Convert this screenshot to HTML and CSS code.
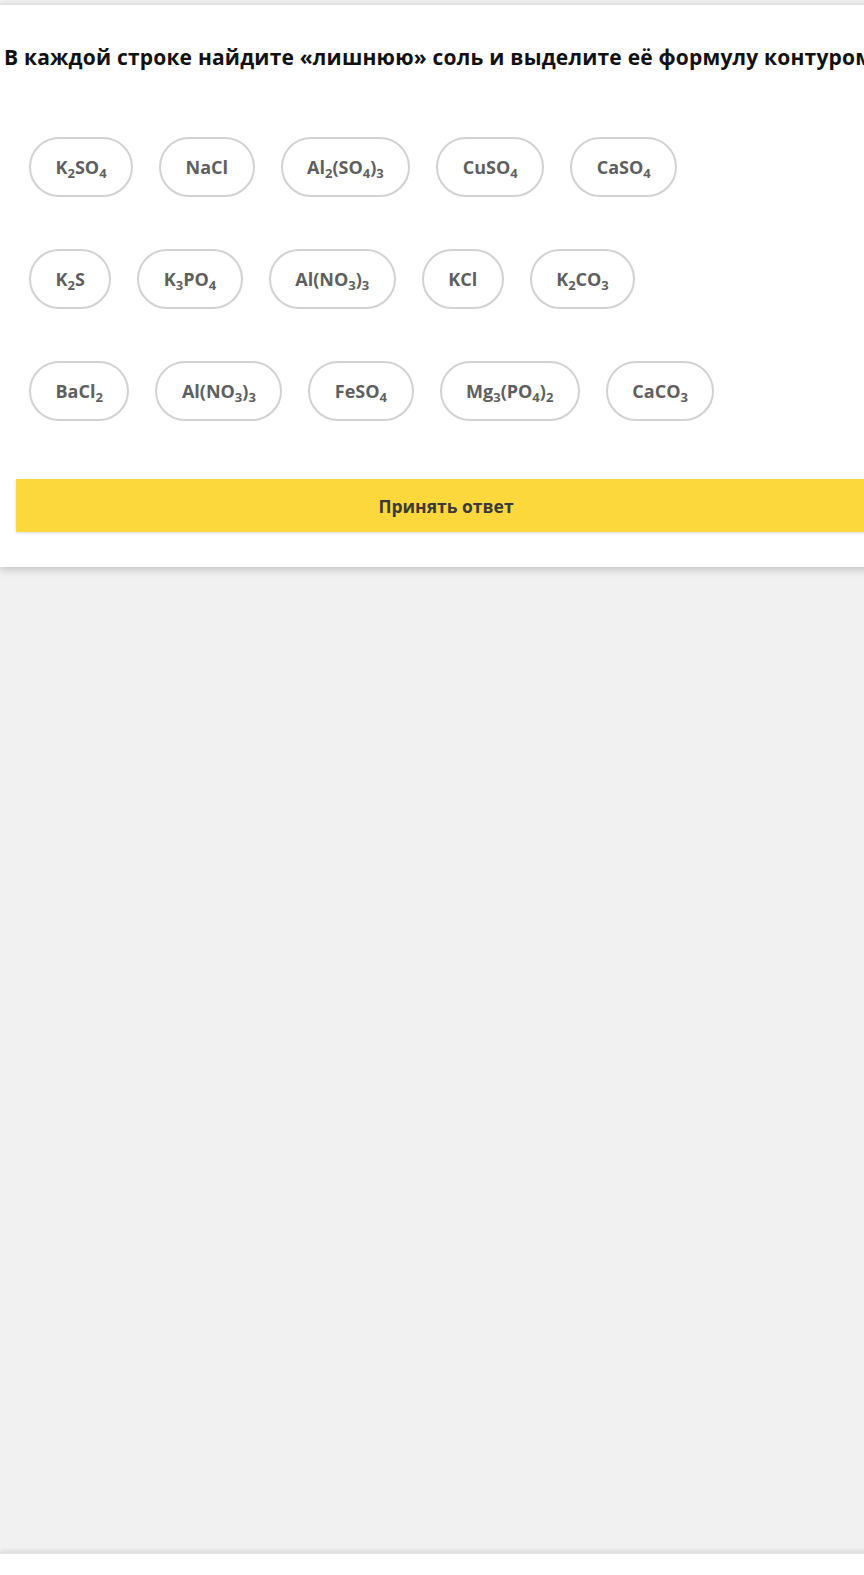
FILE: index.html
```html
<!DOCTYPE html>
<html lang="ru">
<head>
  <meta charset="UTF-8" />
  <meta name="viewport" content="width=device-width, initial-scale=1.0" />
  <title>Лишняя соль</title>
  <link rel="stylesheet" href="styles.css">
</head>
<body>
  <div class="page">
    <div class="card">
      <h1 class="question">В каждой строке найдите «лишнюю» соль и выделите её формулу контуром</h1>

      <div class="rows">
        <div class="row">
          <div class="pill"><span>K<sub>2</sub>SO<sub>4</sub></span></div>
          <div class="pill"><span>NaCl</span></div>
          <div class="pill"><span>Al<sub>2</sub>(SO<sub>4</sub>)<sub>3</sub></span></div>
          <div class="pill"><span>CuSO<sub>4</sub></span></div>
          <div class="pill"><span>CaSO<sub>4</sub></span></div>
        </div>
        <div class="row">
          <div class="pill"><span>K<sub>2</sub>S</span></div>
          <div class="pill"><span>K<sub>3</sub>PO<sub>4</sub></span></div>
          <div class="pill"><span>Al(NO<sub>3</sub>)<sub>3</sub></span></div>
          <div class="pill"><span>KCl</span></div>
          <div class="pill"><span>K<sub>2</sub>CO<sub>3</sub></span></div>
        </div>
        <div class="row">
          <div class="pill"><span>BaCl<sub>2</sub></span></div>
          <div class="pill"><span>Al(NO<sub>3</sub>)<sub>3</sub></span></div>
          <div class="pill"><span>FeSO<sub>4</sub></span></div>
          <div class="pill"><span>Mg<sub>3</sub>(PO<sub>4</sub>)<sub>2</sub></span></div>
          <div class="pill"><span>CaCO<sub>3</sub></span></div>
        </div>
      </div>

      <button class="submit">Принять ответ</button>
    </div>

    <div class="card next"></div>
  </div>
</body>
</html>
```

FILE: styles.css
```css
html, body {
  overflow: hidden;
}

body {
  margin: 0;
  background-color: #f1f1f1;
  font-family: 'Open Sans', 'Noto Sans', sans-serif;
  color: #222;
}

.page {
  width: 892px;
  padding-top: 3px;
}

.card {
  background: white;
  border-top: 2px solid #e2e2e2;
  box-shadow: 0 3px 8px rgba(0, 0, 0, 0.18);
  padding: 0 0 35px;
}

.question {
  font-size: 21px;
  letter-spacing: 0.2px;
  font-weight: 700;
  color: #111;
  margin: 0;
  padding: 38px 0 0 4px;
  line-height: 28px;
  white-space: nowrap;
}

.rows {
  padding: 66px 0 0 29px;
  display: flex;
  flex-direction: column;
  gap: 52px;
}

.row {
  display: flex;
  gap: 26px;
}

.pill {
  height: 60px;
  box-sizing: border-box;
  border: 2px solid #d2d2d2;
  border-radius: 30px;
  padding: 0 24.5px;
  display: flex;
  align-items: center;
  font-size: 18px;
  font-weight: 700;
  color: #5f5f5f;
  white-space: nowrap;
}

.pill sub {
  font-size: 13px;
  vertical-align: baseline;
  position: relative;
  top: 4px;
  line-height: 1;
}

.submit {
  display: block;
  width: 860px;
  height: 53px;
  margin: 58px 0 0 16px;
  background-color: #fdd83d;
  border: none;
  box-shadow: 0 1px 3px rgba(0, 0, 0, 0.15);
  font-family: 'Open Sans', sans-serif;
  font-size: 17.5px;
  font-weight: 700;
  color: #3a3a3a;
  cursor: pointer;
}

.next {
  margin-top: 985px;
  height: 40px;
  padding: 0;
  box-shadow: 0 -2px 4px rgba(0, 0, 0, 0.08);
}
```
